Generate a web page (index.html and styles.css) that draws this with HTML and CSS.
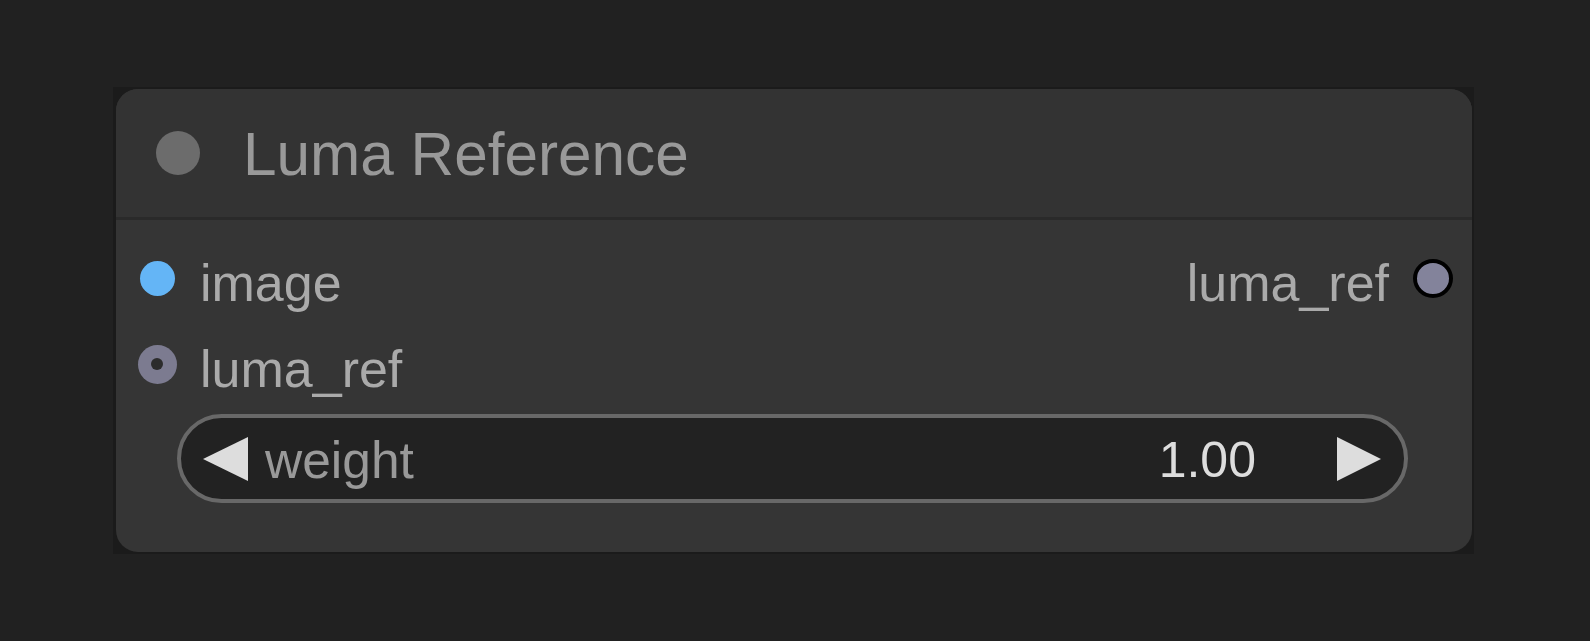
FILE: index.html
```html
<!DOCTYPE html>
<html>
<head>
<meta charset="utf-8">
<title>Luma Reference</title>
<link rel="stylesheet" href="styles.css">
</head>
<body>
<div class="canvas">
  <div class="shadow">
    <div class="node">
      <div class="title">
        <span class="title-dot"></span>
        <span class="title-text">Luma Reference</span>
      </div>
      <div class="body">
        <div class="row row-first">
          <div class="left">
            <div class="slot"><span class="dot dot-image"></span></div>
            <span class="label">image</span>
          </div>
          <div class="right">
            <span class="label">luma_ref</span>
            <span class="dot dot-out"></span>
          </div>
        </div>
        <div class="row">
          <div class="left">
            <div class="slot"><span class="dot dot-ref"><span class="hole"></span></span></div>
            <span class="label">luma_ref</span>
          </div>
        </div>
        <div class="widget">
          <svg class="arrow" width="45" height="44" viewBox="0 0 45 44"><polygon points="0,22 45,0 45,44" fill="#dddddd"/></svg>
          <span class="w-label">weight</span>
          <span class="w-value">1.00</span>
          <svg class="arrow arrow-r" width="44" height="44" viewBox="0 0 44 44"><polygon points="0,0 44,22 0,44" fill="#dddddd"/></svg>
        </div>
      </div>
    </div>
  </div>
</div>
</body>
</html>
```
FILE: styles.css
```css
html, body {
  margin: 0;
  padding: 0;
  background: #212121;
  width: 1590px;
  height: 641px;
  overflow: hidden;
  font-family: "Liberation Sans", Arial, sans-serif;
}
.canvas {
  padding: 87px 0 0 113px;
}
.shadow {
  width: 1356px;
  background: #1b1b1b;
  padding: 2px 2px 2px 3px;
}
.node {
  width: 1356px;
  height: 463px;
  box-sizing: border-box;
  background: #353535;
  border-radius: 22px;
  overflow: hidden;
}
.title {
  height: 128px;
  background: #333333;
  border-bottom: 3px solid #2a2a2a;
  display: flex;
  align-items: center;
  padding-left: 40px;
}
.title-dot {
  width: 44px;
  height: 44px;
  border-radius: 50%;
  background: #6c6c6c;
  flex: none;
}
.title-text {
  margin-left: 43px;
  font-size: 60.3px;
  color: #999999;
  padding-top: 2px;
  white-space: nowrap;
}
.body {
  padding-top: 15px;
}
.row {
  height: 86px;
  display: flex;
  align-items: center;
  justify-content: space-between;
}
.row-first {
  padding-right: 19px;
}
.left, .right {
  display: flex;
  align-items: center;
}
.right {
  gap: 24px;
}
.slot {
  width: 84px;
  padding-right: 2px;
  box-sizing: border-box;
  display: flex;
  justify-content: center;
  align-items: center;
}
.label {
  font-size: 52px;
  color: #aaaaaa;
  padding-top: 9px;
  white-space: nowrap;
}
.dot {
  display: block;
  border-radius: 50%;
  box-sizing: border-box;
}
.dot-image {
  width: 35px;
  height: 35px;
  background: #64b5f6;
}
.dot-ref {
  width: 39px;
  height: 39px;
  background: #7c7b90;
  display: flex;
  align-items: center;
  justify-content: center;
}
.hole {
  width: 12px;
  height: 12px;
  border-radius: 50%;
  background: #2c2c2c;
}
.dot-out {
  width: 40px;
  height: 39px;
  background: #83839b;
  border: 4px solid #000000;
}
.widget {
  margin: 7px 0 0 61px;
  width: 1231px;
  height: 89px;
  box-sizing: border-box;
  border: 4px solid #686868;
  border-radius: 45px;
  background: #222222;
  display: flex;
  align-items: center;
  padding: 0 23px 0 22px;
}
.arrow {
  flex: none;
  display: block;
}
.w-label {
  margin-left: 17px;
  font-size: 51.5px;
  color: #999999;
  padding-top: 3px;
}
.w-value {
  margin-left: auto;
  margin-right: 81px;
  font-size: 50px;
  color: #dddddd;
  padding-top: 3px;
}
```
